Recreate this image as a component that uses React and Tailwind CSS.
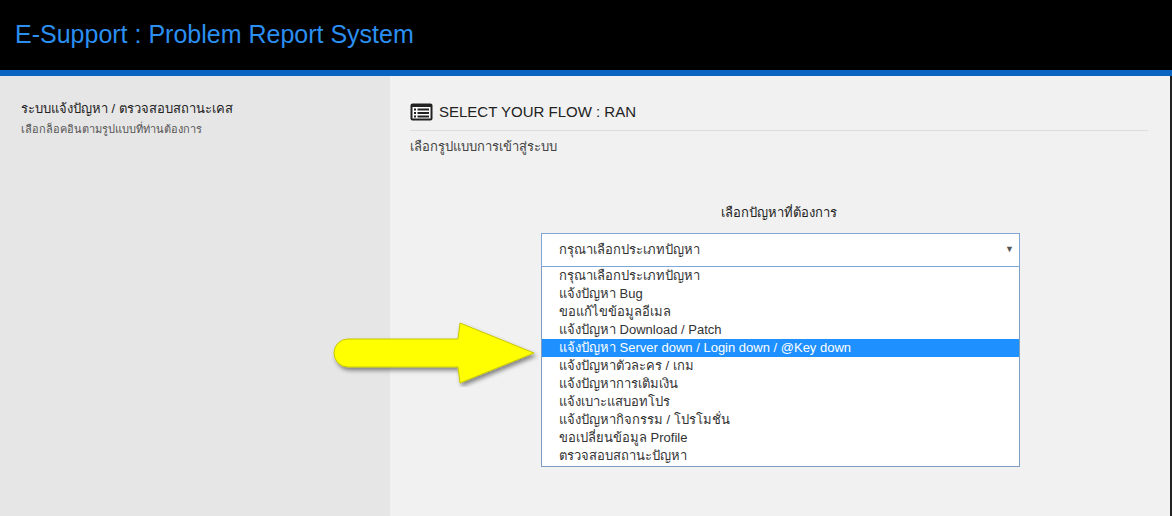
export default function App() {
  const opts = [
    "กรุณาเลือกประเภทปัญหา",
    "แจ้งปัญหา Bug",
    "ขอแก้ไขข้อมูลอีเมล",
    "แจ้งปัญหา Download / Patch",
    "แจ้งปัญหา Server down / Login down / @Key down",
    "แจ้งปัญหาตัวละคร / เกม",
    "แจ้งปัญหาการเติมเงิน",
    "แจ้งเบาะแสบอทโปร",
    "แจ้งปัญหากิจกรรม / โปรโมชั่น",
    "ขอเปลี่ยนข้อมูล Profile",
    "ตรวจสอบสถานะปัญหา",
  ];
  return (
    <div className="w-[1172px] h-[516px] overflow-hidden flex flex-col" style={{ fontFamily: '"Liberation Sans", "Noto Sans", sans-serif' }}>
      <div className="h-[70px] bg-black flex items-center pl-[15px] shrink-0">
        <span className="text-[25px] text-[#2b8ff0]">E-Support : Problem Report System</span>
      </div>
      <div className="h-[6px] bg-[#0a64c2] shrink-0" />
      <div className="flex flex-1 relative">
        <div className="w-[390px] bg-[#e6e6e6] pl-[21px] pt-[23px] shrink-0">
          <div className="text-[13px] text-[#222]">ระบบแจ้งปัญหา / ตรวจสอบสถานะเคส</div>
          <div className="text-[11px] text-[#555] mt-[2px]">เลือกล็อคอินตามรูปแบบที่ท่านต้องการ</div>
        </div>
        <div className="flex-1 bg-[#f1f1f1] pl-[20px] pr-[22px] pt-[25px] border-r-2 border-[#222]">
          <div className="flex items-center gap-[6px] pb-[6px] border-b border-[#ddd]">
            <svg width="23" height="18" viewBox="0 0 23 18">
              <rect x="0.5" y="0.5" width="22" height="17" rx="2" fill="#222" />
              <rect x="2.5" y="4" width="18" height="11.5" fill="#fff" />
              <rect x="4" y="5.5" width="2" height="2" fill="#222" />
              <rect x="7.5" y="5.5" width="11.5" height="2" fill="#222" />
              <rect x="4" y="9" width="2" height="2" fill="#222" />
              <rect x="7.5" y="9" width="11.5" height="2" fill="#222" />
              <rect x="4" y="12.5" width="2" height="2" fill="#222" />
              <rect x="7.5" y="12.5" width="11.5" height="2" fill="#222" />
            </svg>
            <span className="text-[15px] text-[#222]">SELECT YOUR FLOW : RAN</span>
          </div>
          <div className="text-[13px] text-[#444] mt-[6px]">เลือกรูปแบบการเข้าสู่ระบบ</div>
          <div className="text-[13px] text-[#222] text-center mt-[47px] pl-[0px]">เลือกปัญหาที่ต้องการ</div>
          <div className="ml-[131px] w-[479px] mt-[10px]">
            <div className="h-[34px] bg-white border border-[#7fa6d8] flex items-center justify-between pl-[17px] pr-[5px] text-[13px] text-[#333]">
              <span>กรุณาเลือกประเภทปัญหา</span>
              <span className="text-[9px] text-[#555]">▼</span>
            </div>
            <div className="bg-white border border-[#7f9dbf] border-t-0 pb-[1px]">
              {opts.map((o, i) => (
                <div key={i} className={`h-[18px] leading-[18px] pl-[17px] text-[13px] ${i === 4 ? "bg-[#1e90ff] text-white" : "text-[#333]"}`}>{o}</div>
              ))}
            </div>
          </div>
        </div>
        <svg className="absolute left-[330px] top-[245px]" width="210" height="66" viewBox="0 0 210 66">
          <defs>
            <filter id="s" x="-10%" y="-10%" width="130%" height="140%">
              <feDropShadow dx="2" dy="3" stdDeviation="2" floodColor="#000" floodOpacity="0.45" />
            </filter>
          </defs>
          <path d="M18 18 H128 L130 2 L204 32 L130 62 L128 46 H18 A14 14 0 0 1 18 18 Z" fill="#ffff00" stroke="#c8c800" strokeWidth="1" filter="url(#s)" />
        </svg>
      </div>
    </div>
  );
}
